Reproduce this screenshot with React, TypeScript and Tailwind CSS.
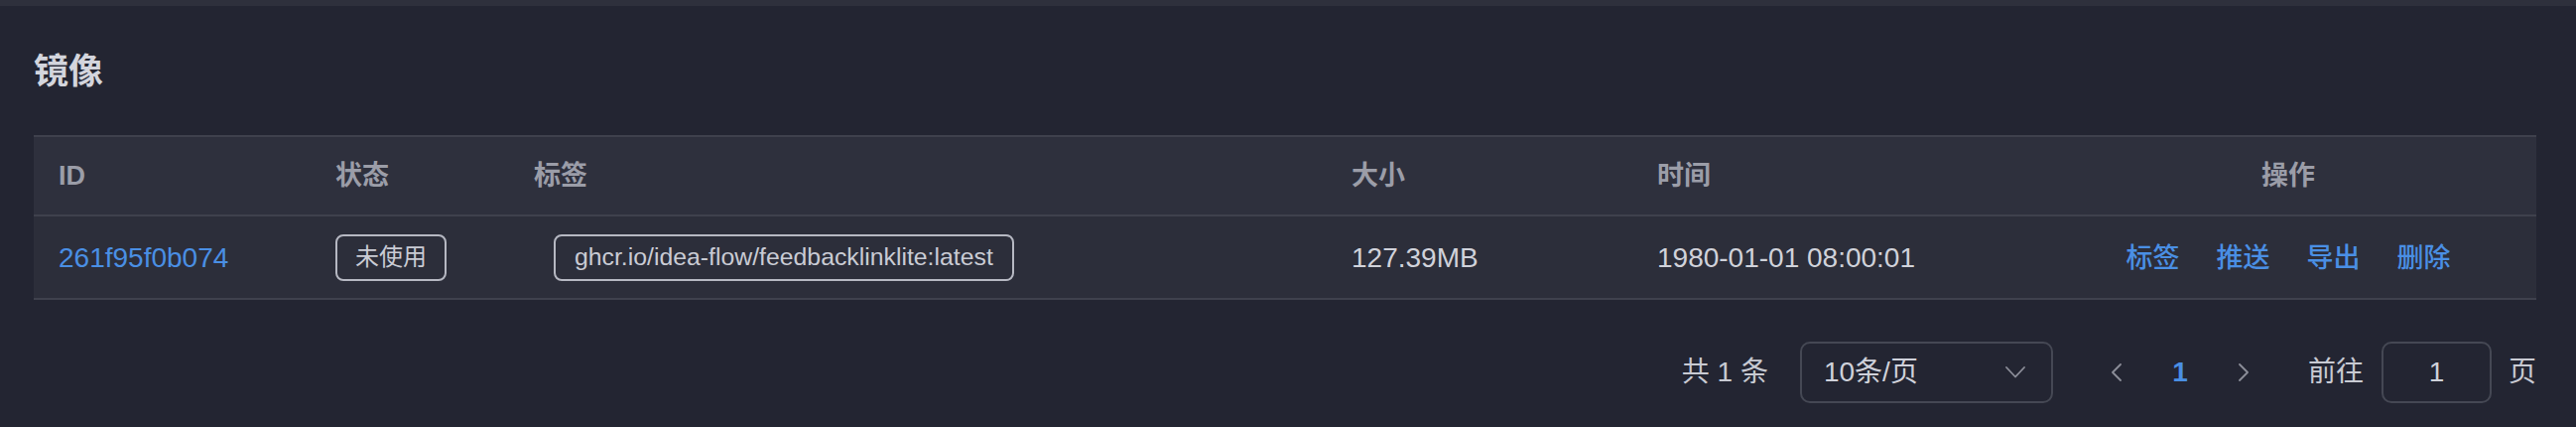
const font = "font-['Liberation_Sans','Noto_Sans_CJK_SC',sans-serif]";

const cols = 'grid grid-cols-[279px_200px_824px_308px_411px_500px]';

interface ImageRow {
  id: string;
  status: string;
  tag: string;
  size: string;
  time: string;
}

const rows: ImageRow[] = [
  {
    id: '261f95f0b074',
    status: '未使用',
    tag: 'ghcr.io/idea-flow/feedbacklinklite:latest',
    size: '127.39MB',
    time: '1980-01-01 08:00:01',
  },
];

const actions = ['标签', '推送', '导出', '删除'];

function Chevron({ dir }: { dir: 'left' | 'right' | 'down' }) {
  if (dir === 'down') {
    return (
      <svg width="20" height="12" viewBox="0 0 20 12" fill="none">
        <path d="M1 1l9 9.5L19 1" stroke="#8c8e99" strokeWidth="1.8" strokeLinecap="round" strokeLinejoin="round" />
      </svg>
    );
  }
  return (
    <svg width="12" height="18" viewBox="0 0 12 18" fill="none">
      <path
        d={dir === 'left' ? 'M10 1L2 9l8 8' : 'M2 1l8 8-8 8'}
        stroke="#8c8e99"
        strokeWidth="1.8"
        strokeLinecap="round"
        strokeLinejoin="round"
      />
    </svg>
  );
}

export default function App() {
  return (
    <div className={`w-[2596px] h-[430px] bg-[#232532] overflow-hidden ${font}`}>
      <div className="h-[6px] bg-[#2e303c]" />
      <div className="pl-[34px] pr-[40px]">
        <h1 className="pt-[48px] h-[82px] text-[35px] leading-[35px] font-bold text-[#d3d5dd]">镜像</h1>

        <div className="mt-[48px] border-y-2 border-[#3f414d]">
          <div className={`${cols} h-[78px] items-center bg-[#2e303d] text-[27px] font-bold text-[#9b9da8]`}>
            <div className="pl-[25px]">ID</div>
            <div className="pl-[25px]">状态</div>
            <div className="pl-[25px]">标签</div>
            <div className="pl-[25px]">大小</div>
            <div className="pl-[25px]">时间</div>
            <div className="text-center">操作</div>
          </div>
          {rows.map((r) => (
            <div
              key={r.id}
              className={`${cols} h-[84px] items-center border-t-2 border-[#3f414d] bg-[#2c2e3a] text-[28px] text-[#d0d2da]`}
            >
              <div className="pl-[25px] pt-[2px] text-[#4a8fe4]">{r.id}</div>
              <div className="pl-[25px]">
                <span className="inline-flex h-[47px] items-center rounded-[8px] border-2 border-[#b6b8c2] px-[18px] text-[24px] text-[#c9cbd4]">
                  {r.status}
                </span>
              </div>
              <div className="pl-[45px]">
                <span className="inline-flex h-[47px] items-center rounded-[8px] border-2 border-[#b6b8c2] px-[19px] text-[24.8px] text-[#c9cbd4]">
                  {r.tag}
                </span>
              </div>
              <div className="pl-[25px] pt-[2px]">{r.size}</div>
              <div className="pl-[25px] pt-[2px]">{r.time}</div>
              <div className="flex justify-center gap-[37px] pt-[2px] text-[27px] font-medium text-[#4a8fe4]">
                {actions.map((a) => (
                  <span key={a}>{a}</span>
                ))}
              </div>
            </div>
          ))}
        </div>

        <div className="mt-[42px] flex h-[62px] items-center justify-end text-[28px] text-[#c8cad2]">
          <span>共 1 条</span>
          <div className="ml-[32px] flex h-[62px] w-[255px] items-center justify-between rounded-[10px] border-2 border-[#454854] pl-[22px] pr-[26px]">
            <span className="text-[#cfd1da]">10条/页</span>
            <Chevron dir="down" />
          </div>
          <div className="ml-[32px] flex">
            <div className="flex h-[62px] w-[64px] items-center justify-center">
              <Chevron dir="left" />
            </div>
            <div className="flex h-[62px] w-[64px] items-center justify-center font-bold text-[#4a8fe4]">1</div>
            <div className="flex h-[62px] w-[64px] items-center justify-center">
              <Chevron dir="right" />
            </div>
          </div>
          <span className="ml-[33px]">前往</span>
          <div className="ml-[18px] flex h-[62px] w-[111px] items-center justify-center rounded-[10px] border-2 border-[#454854] text-[#cfd1da]">
            1
          </div>
          <span className="ml-[17px]">页</span>
        </div>
      </div>
    </div>
  );
}
